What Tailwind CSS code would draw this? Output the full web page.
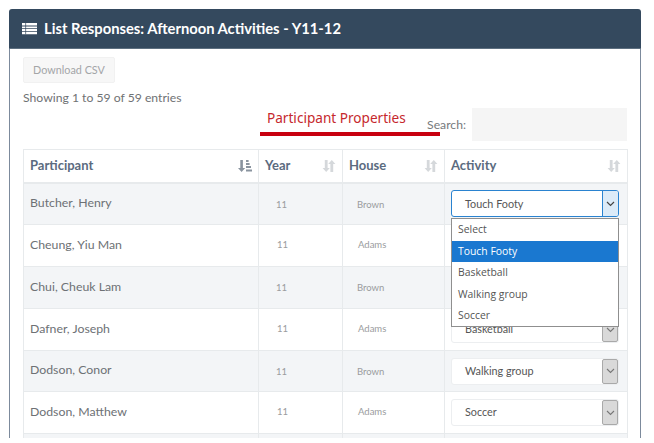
<!DOCTYPE html>
<html>
<head>
<meta charset="utf-8">
<script src="https://cdn.jsdelivr.net/npm/@tailwindcss/browser@4"></script>
</head>
<body class="bg-white overflow-hidden font-['Lato',sans-serif] text-[#6d7175]">
<div class="w-[654px] h-[443px] pt-[9px] pl-[9px]">
  <div class="relative w-[632px] h-[429px] flex flex-col overflow-hidden">
    <div class="h-[40px] shrink-0 bg-[#34495e] rounded-t-[3px] flex items-center pl-[13px] gap-[7px] text-white border-b border-[#5d6f80]">
      <svg width="15" height="13" viewBox="0 0 15 13"><path fill="#fff" d="M0 1h15v2.4H0zM0 4.4h15v1.8H0zM0 7.1h15v1.8H0zM0 9.8h15v2.4H0z"/><path fill="#34495e" d="M3.4 1h.7v11.2h-.7z"/></svg>
      <span class="text-[14.75px] font-bold leading-none">List Responses: Afternoon Activities - Y11-12</span>
    </div>
    <div class="flex-1 border-l border-r border-[#7c8a9c] bg-white pl-[13px] relative">
      <div class="pt-[8px]">
        <div class="w-[92px] h-[26px] rounded-[2px] bg-[#f7f7f7] border border-[#f1f1f1] flex items-center justify-center text-[10.8px] text-[#a3a5a7]">Download CSV</div>
      </div>
      <div class="mt-[7px] h-[16px] flex items-center text-[12.2px] text-[#6f7274]">Showing 1 to 59 of 59 entries</div>
      <div class="mt-[2px] w-[604px] h-[33px] flex justify-end items-center gap-[6px]">
        <span class="text-[12.2px] text-[#777a7d] pt-[2px]">Search:</span>
        <div class="w-[155px] h-[33px] bg-[#f5f5f5]"></div>
      </div>
      <div class="absolute left-[250px] top-[59px] w-[180px] h-[28px] border-b-[4px] border-[#c8000f] pl-[7px] text-[13.6px] leading-[19px] text-[#c6282d] font-['Noto_Sans',sans-serif]">Participant Properties</div>

      <table class="mt-[8px] w-[604px] table-fixed border-collapse text-[12.3px]">
        <colgroup><col class="w-[235px]"><col class="w-[84px]"><col class="w-[102px]"><col class="w-[183px]"></colgroup>
        <thead>
          <tr class="h-[33px] text-[13px] font-bold text-[#5b6b80]">
            <th class="border border-[#e7eaec] border-b-2 px-[6px] text-left font-bold"><div class="flex items-center justify-between">Participant
              <svg width="14" height="14" viewBox="0 0 14 14"><path fill="#8a949f" d="M2.3 1h2.6v8h2.3l-3.6 4L0 9h2.3zM8 1h2.6v2H8zM8 4h3.6v2H8zM8 7h5v2H8zM8 10.4h6v2.2H8z"/></svg></div></th>
            <th class="border border-[#e7eaec] border-b-2 px-[6px] text-left font-bold"><div class="flex items-center justify-between">Year
              <svg width="14" height="14" viewBox="0 0 14 14"><path fill="#d5d8db" d="M2.8 1h2.8v8h2.2L4.2 13 .6 9h2.2zM8.4 13V5H6.2L9.8 1l3.6 4h-2.2v8z"/></svg></div></th>
            <th class="border border-[#e7eaec] border-b-2 px-[6px] text-left font-bold"><div class="flex items-center justify-between">House
              <svg width="14" height="14" viewBox="0 0 14 14"><path fill="#d5d8db" d="M2.8 1h2.8v8h2.2L4.2 13 .6 9h2.2zM8.4 13V5H6.2L9.8 1l3.6 4h-2.2v8z"/></svg></div></th>
            <th class="border border-[#e7eaec] border-b-2 px-[6px] text-left font-bold"><div class="flex items-center justify-between">Activity
              <svg width="14" height="14" viewBox="0 0 14 14"><path fill="#d5d8db" d="M2.8 1h2.8v8h2.2L4.2 13 .6 9h2.2zM8.4 13V5H6.2L9.8 1l3.6 4h-2.2v8z"/></svg></div></th>
          </tr>
        </thead>
        <tbody>
          <tr class="h-[42px] bg-[#f3f5f7]">
            <td class="border border-[#e7eaec] px-[6px] pb-[2px]">Butcher, Henry</td>
            <td class="border border-[#e7eaec] pl-[17px] pt-[2px] text-[9.5px] text-[#9a9c9e]">11</td>
            <td class="border border-[#e7eaec] pl-[14px] pt-[2px] text-[9.5px] text-[#9a9c9e]">Brown</td>
            <td class="border border-[#e7eaec] px-[6px]">
              <div class="h-[27px] w-[168px] rounded-[3px] border border-[#2a83d0] bg-white flex items-center justify-between pl-[13px] text-[10.8px] text-[#555]">Touch Footy
                <span class="w-[16px] h-full bg-[#dcebf8] border-l border-[#2a83d0] flex items-center justify-center rounded-r-[2px]"><svg width="9" height="6" viewBox="0 0 9 6"><path d="M1 1l3.5 3.5L8 1" fill="none" stroke="#444" stroke-width="1.2"/></svg></span>
              </div>
            </td>
          </tr>
          <tr class="h-[42px] bg-white">
            <td class="border border-[#e7eaec] px-[6px]">Cheung, Yiu Man</td>
            <td class="border border-[#e7eaec] pl-[18px] text-[9.5px] text-[#9a9c9e]">11</td>
            <td class="border border-[#e7eaec] pl-[15px] text-[9.5px] text-[#9a9c9e]">Adams</td>
            <td class="border border-[#e7eaec] px-[6px]"></td>
          </tr>
          <tr class="h-[42px] bg-[#f3f5f7]">
            <td class="border border-[#e7eaec] px-[6px]">Chui, Cheuk Lam</td>
            <td class="border border-[#e7eaec] pl-[17px] pt-[2px] text-[9.5px] text-[#9a9c9e]">11</td>
            <td class="border border-[#e7eaec] pl-[14px] pt-[2px] text-[9.5px] text-[#9a9c9e]">Brown</td>
            <td class="border border-[#e7eaec] px-[6px]"></td>
          </tr>
          <tr class="h-[42px] bg-white">
            <td class="border border-[#e7eaec] px-[6px]">Dafner, Joseph</td>
            <td class="border border-[#e7eaec] pl-[18px] text-[9.5px] text-[#9a9c9e]">11</td>
            <td class="border border-[#e7eaec] pl-[15px] text-[9.5px] text-[#9a9c9e]">Adams</td>
            <td class="border border-[#e7eaec] px-[6px]">
              <div class="h-[27px] w-[168px] rounded-[3px] border border-[#eceef0] bg-white flex items-center justify-between pl-[13px] text-[10.8px] text-[#555]">Basketball
                <span class="w-[16px] h-full bg-[#d9d9d9] border border-[#a9a9a9] flex items-center justify-center rounded-[2px]"><svg width="9" height="6" viewBox="0 0 9 6"><path d="M1 1l3.5 3.5L8 1" fill="none" stroke="#777" stroke-width="1.1"/></svg></span>
              </div>
            </td>
          </tr>
          <tr class="h-[41px] bg-[#f3f5f7]">
            <td class="border border-[#e7eaec] px-[6px] pb-[2px]">Dodson, Conor</td>
            <td class="border border-[#e7eaec] pl-[17px] pt-[2px] text-[9.5px] text-[#9a9c9e]">11</td>
            <td class="border border-[#e7eaec] pl-[14px] pt-[2px] text-[9.5px] text-[#9a9c9e]">Brown</td>
            <td class="border border-[#e7eaec] px-[6px]">
              <div class="h-[27px] w-[168px] rounded-[3px] border border-[#eceef0] bg-white flex items-center justify-between pl-[13px] text-[10.8px] text-[#555]">Walking group
                <span class="w-[16px] h-full bg-[#d9d9d9] border border-[#a9a9a9] flex items-center justify-center rounded-[2px]"><svg width="9" height="6" viewBox="0 0 9 6"><path d="M1 1l3.5 3.5L8 1" fill="none" stroke="#777" stroke-width="1.1"/></svg></span>
              </div>
            </td>
          </tr>
          <tr class="h-[42px] bg-white">
            <td class="border border-[#e7eaec] px-[6px]">Dodson, Matthew</td>
            <td class="border border-[#e7eaec] pl-[18px] text-[9.5px] text-[#9a9c9e]">11</td>
            <td class="border border-[#e7eaec] pl-[15px] text-[9.5px] text-[#9a9c9e]">Adams</td>
            <td class="border border-[#e7eaec] px-[6px]">
              <div class="h-[27px] w-[168px] rounded-[3px] border border-[#eceef0] bg-white flex items-center justify-between pl-[13px] text-[10.8px] text-[#555]">Soccer
                <span class="w-[16px] h-full bg-[#d9d9d9] border border-[#a9a9a9] flex items-center justify-center rounded-[2px]"><svg width="9" height="6" viewBox="0 0 9 6"><path d="M1 1l3.5 3.5L8 1" fill="none" stroke="#777" stroke-width="1.1"/></svg></span>
              </div>
            </td>
          </tr>
          <tr class="h-[42px] bg-[#f3f5f7]"><td class="border border-[#e7eaec]"></td><td class="border border-[#e7eaec]"></td><td class="border border-[#e7eaec]"></td><td class="border border-[#e7eaec]"></td></tr>
        </tbody>
      </table>

      <div class="absolute left-[441px] top-[169px] w-[168px] h-[109px] bg-white border border-[#8f8f8f] text-[10.4px] text-[#555] font-['Open_Sans',sans-serif] flex flex-col">
        <div class="h-[22px] shrink-0 flex items-center pl-[6px]">Select</div>
        <div class="h-[21px] shrink-0 flex items-center pl-[6px] bg-[#1a78d0] text-white">Touch Footy</div>
        <div class="h-[22px] shrink-0 flex items-center pl-[6px]">Basketball</div>
        <div class="h-[21px] shrink-0 flex items-center pl-[6px]">Walking group</div>
        <div class="h-[21px] shrink-0 flex items-center pl-[6px]">Soccer</div>
      </div>
    </div>
  </div>
</div>
</body>
</html>
